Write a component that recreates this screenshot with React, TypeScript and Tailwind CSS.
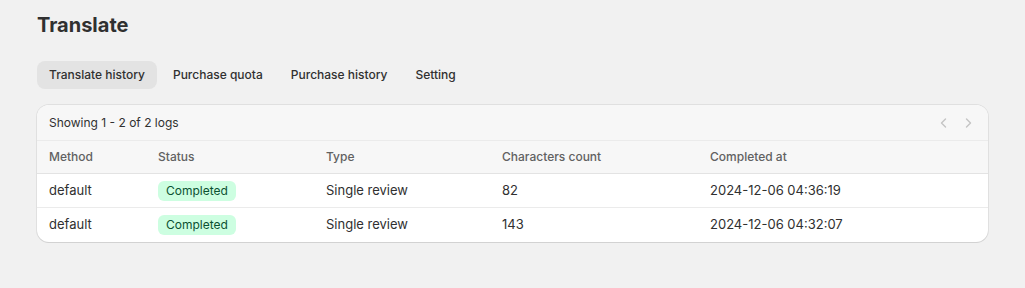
import React from 'react';

const tabs = ['Translate history', 'Purchase quota', 'Purchase history', 'Setting'];

const logs = [
  { method: 'default', status: 'Completed', type: 'Single review', count: 82, at: '2024-12-06 04:36:19' },
  { method: 'default', status: 'Completed', type: 'Single review', count: 143, at: '2024-12-06 04:32:07' },
];

const cols = 'grid grid-cols-[109px_168px_176px_208px_1fr] items-center';

const Chevron: React.FC<{ dir: 'left' | 'right' }> = ({ dir }) => (
  <svg width="16" height="16" viewBox="0 0 16 16" fill="none">
    <path
      d={dir === 'left' ? 'M9.5 4 5.5 8l4 4' : 'M6.5 4l4 4-4 4'}
      stroke="#c4c4c4"
      strokeWidth="1.4"
      strokeLinecap="round"
      strokeLinejoin="round"
    />
  </svg>
);

export default function App() {
  return (
    <div className="min-h-[288px] bg-[#f1f1f1] px-[37px] pt-[13px] font-['Inter','Liberation_Sans',sans-serif] text-[13px] text-[#303030]">
      <h1 className="text-[20px] font-bold leading-6 text-[#303030]">Translate</h1>

      {/* Tabs */}
      <div className="mt-6 flex gap-1">
        {tabs.map((t, i) => (
          <div
            key={t}
            className={`h-[28px] rounded-lg px-3 flex items-center text-[12px] font-[550] text-[#303030] ${
              i === 0 ? 'bg-[#e3e3e3]' : ''
            }`}
          >
            {t}
          </div>
        ))}
      </div>

      {/* Logs card */}
      <div className="mt-4 overflow-hidden rounded-xl bg-white shadow-[0_1px_0_0_rgba(26,26,26,0.07),0_0_0_1px_rgba(0,0,0,0.07)]">
        <div className="flex h-9 items-center justify-between bg-[#f7f7f7] px-3 border-b border-[#ebebeb] text-[12px]">
          <span>Showing 1 - 2 of 2 logs</span>
          <div className="flex items-center gap-2">
            <Chevron dir="left" />
            <Chevron dir="right" />
          </div>
        </div>
        <div className={`${cols} h-[33px] bg-[#f7f7f7] border-b border-[#e3e3e3] text-[12px] text-[#616161] font-medium`}>
          <div className="pl-3">Method</div>
          <div className="pl-3">Status</div>
          <div className="pl-3">Type</div>
          <div className="pl-3">Characters count</div>
          <div className="pl-3">Completed at</div>
        </div>
        {logs.map((l, i) => (
          <div
            key={i}
            className={`${cols} h-[34px] ${i < logs.length - 1 ? 'border-b border-[#ebebeb]' : ''}`}
          >
            <div className="pl-3">{l.method}</div>
            <div className="pl-3">
              <span className="inline-flex h-5 items-center rounded-md bg-[#cdfee1] px-2 text-[12px] text-[#0c5132]">
                {l.status}
              </span>
            </div>
            <div className="pl-3">{l.type}</div>
            <div className="pl-3">{l.count}</div>
            <div className="pl-3">{l.at}</div>
          </div>
        ))}
      </div>
    </div>
  );
}
